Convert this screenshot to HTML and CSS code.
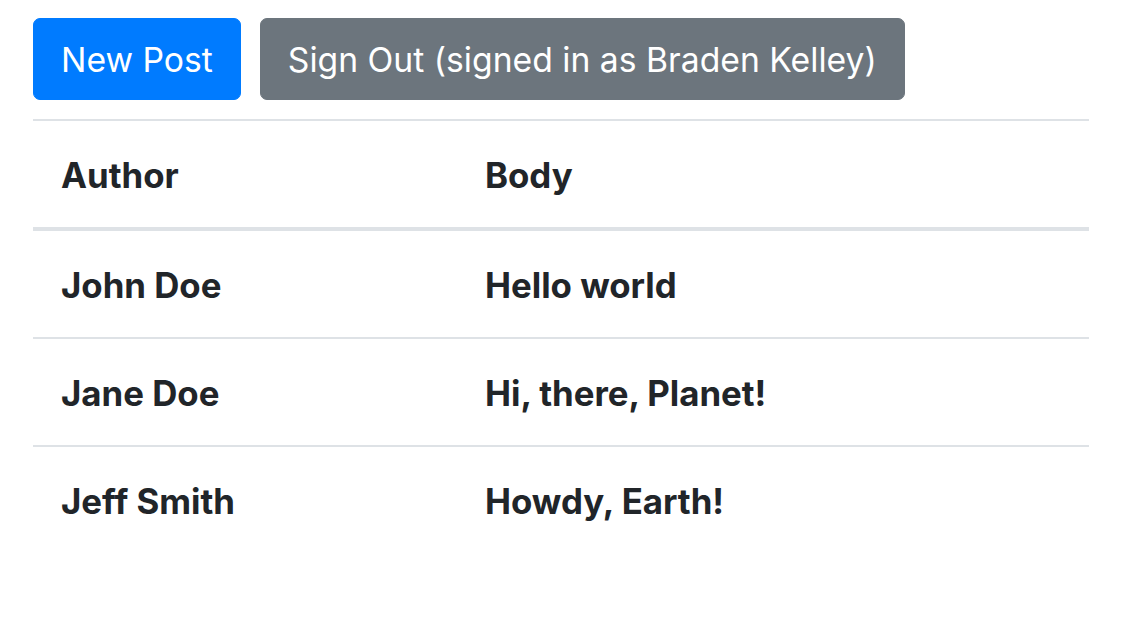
FILE: index.html
```html
<!DOCTYPE html>
<html lang="en">
<head>
<meta charset="utf-8">
<title>Posts</title>
<link rel="stylesheet" href="styles.css">
</head>
<body>
<div class="page">
  <div class="actions">
    <a class="btn btn-primary" href="#">New Post</a>
    <a class="btn btn-secondary" href="#">Sign Out (signed in as Braden Kelley)</a>
  </div>
  <table class="posts">
    <colgroup><col class="col-author"><col class="col-body"></colgroup>
    <thead>
      <tr><th>Author</th><th>Body</th></tr>
    </thead>
    <tbody>
      <tr><td>John Doe</td><td>Hello world</td></tr>
      <tr><td>Jane Doe</td><td>Hi, there, Planet!</td></tr>
      <tr><td>Jeff Smith</td><td>Howdy, Earth!</td></tr>
    </tbody>
  </table>
</div>
</body>
</html>
```
FILE: styles.css
```css
html, body {
  margin: 0;
  padding: 0;
  background: #ffffff;
}
body {
  font-family: Inter, "Noto Sans", "Liberation Sans", sans-serif;
  color: #212529;
}
.page {
  padding: 18px 33px;
  width: 1056px;
}
.actions {
  display: flex;
  gap: 19px;
}
.btn {
  display: inline-block;
  font-size: 33.7px;
  line-height: 52px;
  padding: 15px 27px 13px;
  border: 1px solid transparent;
  border-radius: 7px;
  color: #ffffff;
  text-decoration: none;
  font-weight: 400;
}
.btn-primary {
  background: #007bff;
  border-color: #007bff;
}
.btn-secondary {
  background: #6c757d;
  border-color: #6c757d;
}
.posts {
  margin-top: 19px;
  width: 1056px;
  border-collapse: collapse;
  table-layout: fixed;
}
.col-author { width: 424px; }
.posts th, .posts td {
  text-align: left;
  font-weight: 700;
  font-size: 34.8px;
  line-height: 52px;
  padding: 28px 28px 26px;
  border-top: 2px solid #dee2e6;
  vertical-align: top;
}
.posts thead th {
  border-bottom: 4px solid #dee2e6;
}
```
